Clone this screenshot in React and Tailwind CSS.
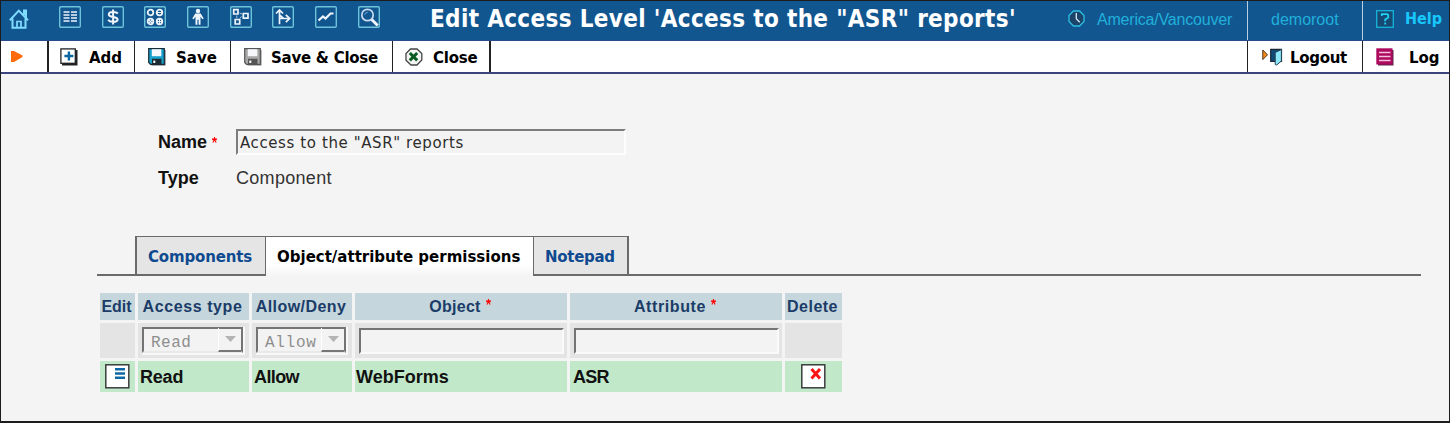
import React from "react";

const BAR = "font-['DejaVu_Sans',sans-serif] text-[15px] font-bold whitespace-nowrap leading-[20px]";
const ARIAL = "font-['Liberation_Sans',sans-serif] whitespace-nowrap";

function HomeIcon() {
  return (
    <svg width="20" height="20" viewBox="0 0 20 20" fill="none" stroke="#7fdcff" strokeWidth="2">
      <path d="M.8 11.2 9.8 1.6 19 11.2M3.500 9.500v9.200h13V9.500M15 6V1.600h2v7" />
      <path d="M8 18.500v-6h4v6" strokeWidth="1.700" />
    </svg>
  );
}

function NavIcon({ children }) {
  return (
    <svg width="22" height="22" viewBox="0 0 22 22" fill="none" stroke="#eef4fc" strokeWidth="1.700">
      <rect x=".7" y=".7" width="20.600" height="20.600" rx="1.200" stroke="#6cc3da" strokeWidth="1.400" />
      {children}
    </svg>
  );
}

const navIcons = [
  <path key="list" d="M4.500 6h6M12 6h6M4.500 9h6M12 9h6M4.500 12h6M12 12h6M4.500 15h6M12 15h6" strokeWidth="1.500" />,
  <g key="money" strokeWidth="2">
    <path d="M15.800 7.500c-1-1.200-2.500-1.500-4.700-1.500-2.500 0-4.300.8-4.300 2.400 0 3.400 8.800 1.600 8.800 5 0 1.700-2 2.400-4.500 2.400-2.300 0-4-.6-5-1.900M11.100 3.500v15" />
  </g>,
  <g key="ops" strokeWidth="1.800">
    <circle cx="6.500" cy="6.500" r="2.800" />
    <circle cx="15.500" cy="6.500" r="2.800" />
    <circle cx="6.500" cy="15.500" r="2.800" />
    <circle cx="15.500" cy="15.500" r="2.800" />
    <path d="M13 6.500h5M13 15.500h5M15.500 13v5M4.800 13.800l3.400 3.400M8.200 13.800l-3.400 3.400" strokeWidth="1.200" />
  </g>,
  <g key="person" fill="#eef4fc" stroke="none">
    <circle cx="11" cy="5" r="2.200" />
    <path d="M8.300 7.400h5.400l3 5-1.300.9-1.900-2.500V18.800h-1.900v-5h-1.200v5H8.500v-8l-1.900 2.500-1.300-.9z" />
  </g>,
  <g key="nodes">
    <path d="M3.700 3.700h4.300v4.300h-4.300zM13.300 7.500h4.700v4.700h-4.700zM5.200 13.500h4.500v4.500H5.200z" />
    <path d="M9.500 7l2.500 1M6.800 9.500v2.500M9.700 12l2-1.500" strokeWidth="1" stroke="#a9c8e8" />
  </g>,
  <path key="branch" d="M7.500 18.300V4M4 7.500l3.500-3.600L11 7.500M7.500 12.500h9.500M13.800 8.800l3.900 3.700-3.900 3.700M7.500 9l4 3.500" strokeWidth="1.700" />,
  <path key="trend" d="M3.500 14.500l4.500-4 2.500 2 5-5h3" strokeWidth="2.200" />,
  <g key="search">
    <circle cx="9.500" cy="9" r="5.700" stroke="#c9daf0" />
    <path d="M13.700 13.500l6 6" strokeWidth="3" />
    <path d="M6.800 8.500c.5-1.500 1.500-2 2.700-2.200" strokeWidth="1" stroke="#9dc4e4" />
  </g>,
];

function AddIcon() {
  return (
    <svg width="18" height="18" viewBox="0 0 18 18">
      <path d="M2 2h15.500v15.500H2z" fill="#222" />
      <rect x=".9" y=".9" width="14.400" height="14.400" fill="#fff" stroke="#222" strokeWidth="1.300" />
      <path d="M8.900 3.500v9M4.400 8h9" stroke="#0d66a0" strokeWidth="2.400" />
    </svg>
  );
}

function DiskIcon({ body, dark }) {
  return (
    <svg width="18" height="18" viewBox="0 0 18 18">
      <path d="M2.500 2h15v15.500h-14z" fill={dark} opacity=".75" />
      <path d="M.7.700h15.600v15.600H2.500L.7 14.500z" fill={body} stroke={dark} strokeWidth="1.200" />
      <path d="M3.800 1.200h9.500v7H3.800z" fill="#f4f8fa" />
      <path d="M4 10.800h9.500v5.500H4z" fill={dark} />
      <path d="M5.300 12.500h2v2.500h-2z" fill="#fff" />
    </svg>
  );
}

function CloseIcon() {
  return (
    <svg width="18" height="18" viewBox="0 0 18 18" fill="none">
      <path d="M5.500 1h6.500l4.800 4.500v6.500L12 17H6l-5-4.800V5.500z" fill="#f2f5f2" stroke="#444" strokeWidth="1.300" />
      <path d="M4.800 5l7.400 7.400M12.200 5l-7.400 7.400" stroke="#0b5a22" strokeWidth="3" />
    </svg>
  );
}

function LogoutIcon() {
  return (
    <svg width="21" height="18" viewBox="0 0 21 18">
      <path d="M.8 2l4.700 4.800-4.700 4.800z" fill="#ff8a10" stroke="#4a3626" strokeWidth="1" />
      <path d="M8.700 1.300h10.800v12H8.700z" fill="#0f4a78" stroke="#1c2733" strokeWidth="1.200" />
      <path d="M13.200 4.500l6.200-3v11.500l-4.700 4-1.500-.5z" fill="#8be6fa" stroke="#24424f" strokeWidth="1" />
    </svg>
  );
}

function LogIcon() {
  return (
    <svg width="18" height="18" viewBox="0 0 18 18">
      <path d="M2 2h15.500v15.500H2z" fill="#5e2348" />
      <rect x=".3" y=".3" width="16.200" height="16.200" fill="#ac0a5e" />
      <path d="M3 4.500h11.500M3 8.500h11.500M3 12.500h11.500" stroke="#f6bfdc" strokeWidth="1.300" />
    </svg>
  );
}

function ClockIcon() {
  return (
    <svg width="17" height="17" viewBox="0 0 17 17" fill="none" stroke="#2cc0e4" strokeWidth="1.300">
      <path d="M5.500 1h6l4.500 4.500v6L11.500 16h-6L1 11.500v-6z" fill="#1c4468" />
      <path d="M8.300 3v5.700l3.400 3.600" stroke="#d4eaf2" />
    </svg>
  );
}

function HelpIcon() {
  return (
    <svg width="18" height="18" viewBox="0 0 18 18" fill="none" stroke="#16b4dc" strokeWidth="1.300">
      <rect x=".7" y=".7" width="16.600" height="16.600" fill="#174a72" />
      <path d="M5.800 6V4.200h5.400l1 1v2.300L9.200 9.500v1.800M9.200 12.500v2" stroke="#22d0f4" strokeWidth="1.800" />
    </svg>
  );
}

function Star({ className = "" }) {
  return (
    <svg width="5" height="6" viewBox="0 0 5 6" className={"shrink-0 " + className}>
      <path d="M2.500 0v3.500M.2 1.700l4.600 1M4.800 1.700l-4.600 1M2.500 2.500L.9 5.500M2.500 2.500l1.600 3" stroke="#f00" strokeWidth="1.100" />
    </svg>
  );
}

function Tool({ className, icon, children }) {
  return (
    <div className={"flex h-full items-center border-r border-[#222] " + className}>
      {icon}
      {children}
    </div>
  );
}

function SelectBox({ className, textClass, label }) {
  return (
    <div className={"flex h-[28px] border-r-2 border-b-2 border-[#f8f8f8] " + className}>
      <div className="flex h-[26px] w-full items-center justify-between border-2 border-[#747474] border-b-[#e9e9e9] bg-[#f3f3f3]">
        <span className={"pt-[5px] pl-[7px] font-['Liberation_Mono',monospace] text-[16px] leading-[20px] text-[#8e8e8e] " + textClass}>{label}</span>
        <span className="flex h-[24px] w-[23px] shrink-0 items-center justify-center border-b-2 border-l border-[#777] border-l-white">
          <svg width="11" height="6" viewBox="0 0 11 6"><path d="M0 0h11L5.500 6z" fill="#b4b4b4" /></svg>
        </span>
      </div>
    </div>
  );
}

function TextBox({ className }) {
  return (
    <div className={"h-[26px] border-2 border-t-[#747474] border-l-[#747474] border-r-[#fafafa] border-b-[#fafafa] bg-[#f3f3f3] " + className} />
  );
}

const HEAD = "flex h-[27px] items-center justify-center bg-[#c5d7dc] pr-[2px] text-[16px] font-bold text-[#1b3c68] " + ARIAL;
const FILTER = "flex h-[35px] bg-[#e4e4e4]";
const CELL = "flex h-[31px] items-center bg-[#c1e9c9] text-[18px] font-bold text-[#111] " + ARIAL;

export default function App() {
  return (
    <div className="flex h-[423px] w-[1450px] flex-col overflow-hidden border border-b-2 border-[#1c1c1c] bg-[#f4f4f4]">
      <header className="flex h-[40px] shrink-0 items-stretch border-b border-[#2a4a8c] bg-[#125690]">
        <div className="w-[58px] pt-[8px] pl-[8px]"><HomeIcon /></div>
        <nav className="flex w-[371px] gap-[20.700px] pt-[5px]">
          {navIcons.map((icon, i) => (
            <NavIcon key={i}>{icon}</NavIcon>
          ))}
        </nav>
        <h1 className="w-[638px] pt-[2px] font-['DejaVu_Sans_Condensed','DejaVu_Sans',sans-serif] text-[24px] leading-[32px] font-bold tracking-[0.340px] whitespace-nowrap text-white">
          Edit Access Level 'Access to the "ASR" reports'
        </h1>
        <div className={"flex w-[180px] items-start border-r border-[#b9cfe2] pt-[9px] text-[16px] leading-[18px] tracking-[-0.200px] text-[#20b0da] " + ARIAL}>
          <ClockIcon />
          <span className="pt-[1px] pl-[12px]">America/Vancouver</span>
        </div>
        <div className={"w-[115px] border-r border-[#b9cfe2] pt-[10px] pl-[23px] text-[16px] leading-[18px] text-[#20b0da] " + ARIAL}>demoroot</div>
        <div className="flex items-start pt-[9px] pl-[13px]">
          <HelpIcon />
          <span className="pl-[11px] font-['DejaVu_Sans_Condensed','DejaVu_Sans',sans-serif] text-[16px] leading-[18px] font-bold text-[#18c8fc]">Help</span>
        </div>
      </header>

      <div className={"flex h-[33px] shrink-0 items-stretch border-b-2 border-[#3c4480] bg-white text-black " + BAR}>
        <div className="flex w-[48px] items-center border-r-2 border-[#222] pl-[10px]">
          <svg width="12" height="11" viewBox="0 0 12 11"><path d="M0 0h3l8.500 4.500v1.500L3 11H0z" fill="#ff6a0a" /></svg>
        </div>
        <Tool className="w-[86px] pl-[11px]" icon={<AddIcon />}><span className="pt-[2px] pl-[11px]">Add</span></Tool>
        <Tool className="w-[96px] pl-[13px]" icon={<DiskIcon body="#16a0cc" dark="#1c2a34" />}><span className="pt-[2px] pl-[10px]">Save</span></Tool>
        <Tool className="w-[162px] pl-[13px]" icon={<DiskIcon body="#a8a8a8" dark="#555" />}><span className="pt-[2px] pl-[9px] tracking-[-0.250px]">Save &amp; Close</span></Tool>
        <Tool className="w-[98px] border-r-2 pl-[12px]" icon={<CloseIcon />}><span className="pt-[2px] pl-[10px] tracking-[-0.200px]">Close</span></Tool>
        <div className="w-[757px] border-r border-[#222]" />
        <Tool className="w-[115px] pl-[14px]" icon={<LogoutIcon />}><span className="pt-[2px] pl-[7px] tracking-[-0.300px]">Logout</span></Tool>
        <div className="flex items-center pl-[13px]"><LogIcon /><span className="pt-[2px] pl-[15px]">Log</span></div>
      </div>

      <main className="flex flex-col">
        <div className="mt-[55px] flex h-[26px] items-start pl-[157px]">
          <div className={"flex w-[78px] pt-[2px] text-[18px] leading-[22px] font-bold text-[#111] " + ARIAL}>
            Name<Star className="mt-[6px] ml-[5px]" />
          </div>
          <div className="h-[26px] w-[390px] border-2 border-t-[#7c7c7c] border-l-[#7c7c7c] border-r-[#fdfdfd] border-b-[#fdfdfd] bg-[#f3f3f3] pl-[2px] font-['DejaVu_Sans',sans-serif] text-[15px] leading-[24px] tracking-[0.600px] whitespace-nowrap text-[#2c2c2c]">
            Access to the "ASR" reports
          </div>
        </div>
        <div className={"mt-[12px] flex h-[22px] pl-[157px] text-[18px] leading-[22px] text-[#111] " + ARIAL}>
          <div className="w-[78px] font-bold">Type</div>
          <div className="tracking-[0.300px] text-[#333]">Component</div>
        </div>

        <div className={"mt-[47px] ml-[96px] flex h-[40px] w-[1324px] items-stretch " + BAR}>
          <div className="w-[38px] border-b-2 border-[#6a6a6a]" />
          <div className="w-[131px] border-2 border-t border-r border-[#6a6a6a] bg-[#e5e5e5] pt-[10px] pl-[11px] tracking-[-0.150px] text-[#0f4a90]">Components</div>
          <div className="w-[267px] border-t border-[#6a6a6a] bg-gradient-to-b from-white from-70% to-[#f4f4f4] pt-[10px] pl-[11px]">Object/attribute permissions</div>
          <div className="w-[96px] border-2 border-t border-l border-[#6a6a6a] bg-[#e5e5e5] pt-[10px] pl-[11px] tracking-[-0.300px] text-[#0f4a90]">Notepad</div>
          <div className="flex-1 border-b-2 border-[#6a6a6a]" />
        </div>

        <div className="mt-[17px] ml-[99px] grid w-[742px] grid-cols-[35px_111px_100px_212px_212px_57px] gap-[3px]">
          <div className={HEAD}>Edit</div>
          <div className={HEAD + " tracking-[0.600px]"}>Access type</div>
          <div className={HEAD + " tracking-[0.450px]"}>Allow/Deny</div>
          <div className={HEAD + " tracking-[0.250px]"}>Object<Star className="mb-[9px] ml-[5px]" /></div>
          <div className={HEAD + " tracking-[0.600px]"}>Attribute<Star className="mb-[9px] ml-[5px]" /></div>
          <div className={HEAD + " tracking-[0.500px]"}>Delete</div>

          <div className={FILTER} />
          <div className={FILTER + " pt-[4px] pl-[4px]"}><SelectBox className="w-[103px]" textClass="tracking-[0.500px]" label="Read" /></div>
          <div className={FILTER + " pt-[4px] pl-[4px]"}><SelectBox className="w-[92px]" textClass="tracking-[0.700px]" label="Allow" /></div>
          <div className={FILTER + " pt-[5px] pl-[4px]"}><TextBox className="w-[205px]" /></div>
          <div className={FILTER + " pt-[5px] pl-[4px]"}><TextBox className="w-[205px]" /></div>
          <div className={FILTER} />

          <div className={CELL + " pl-[5px]"}>
            <svg width="25" height="25" viewBox="0 0 25 25">
              <rect x=".8" y=".8" width="23" height="23" fill="#fff" stroke="#3c3c3c" strokeWidth="1.500" />
              <path d="M10 5.300h10M10 9.500h10M10 13.700h10" stroke="#0c68a4" strokeWidth="2.600" />
            </svg>
          </div>
          <div className={CELL + " pt-[1px] pl-[2px] tracking-[-0.200px]"}>Read</div>
          <div className={CELL + " pt-[1px] pl-[2px] tracking-[-0.600px]"}>Allow</div>
          <div className={CELL + " pt-[1px] pl-[1px]"}>WebForms</div>
          <div className={CELL + " pt-[1px] pl-[3px] tracking-[-0.800px]"}>ASR</div>
          <div className={CELL + " pl-[16px]"}>
            <svg width="25" height="25" viewBox="0 0 25 25">
              <rect x=".8" y=".8" width="23" height="23" fill="#fff" stroke="#3c3c3c" strokeWidth="1.500" />
              <path d="M10.500 5l8.500 9.500M19 5l-8.500 9.500" stroke="#fb1515" strokeWidth="3" />
            </svg>
          </div>
        </div>
      </main>
    </div>
  );
}
